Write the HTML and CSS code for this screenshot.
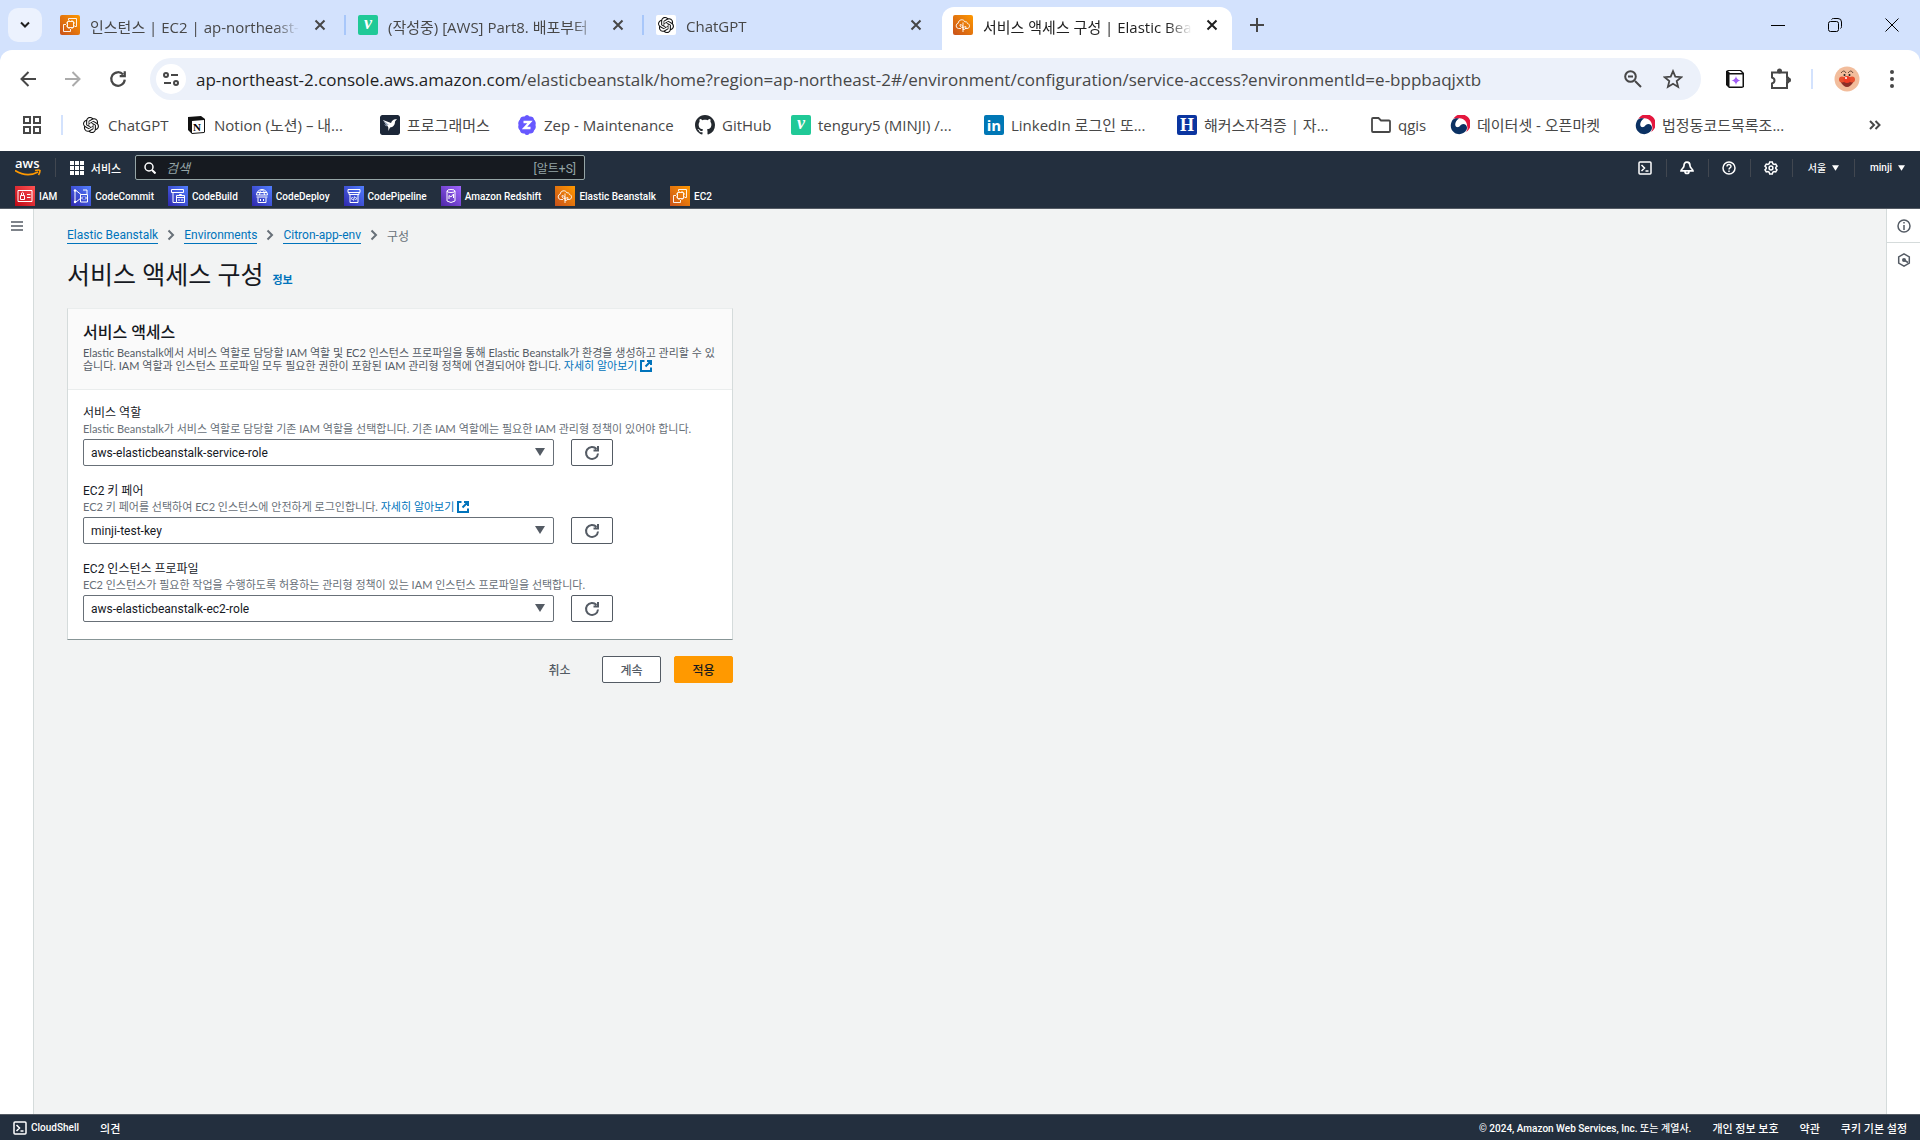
FILE: index.html
```html
<!DOCTYPE html>
<html lang="ko">
<head>
    <meta charset="UTF-8">
    <meta name="viewport" content="width=device-width, initial-scale=1.0">
    <title>서비스 액세스 구성 | Elastic Beanstalk</title>
    <link rel="stylesheet" href="styles.css">
</head>
<body>

    <!-- shared icons -->
    <svg class="defs" width="0" height="0" aria-hidden="true">
        <defs>
            <linearGradient id="orange" x1="0" y1="1" x2="1" y2="0"><stop offset="0" stop-color="#c8511b"/><stop offset="1" stop-color="#f90"/></linearGradient>
            <linearGradient id="blue" x1="0" y1="1" x2="1" y2="0"><stop offset="0" stop-color="#2e27ad"/><stop offset="1" stop-color="#527fff"/></linearGradient>
            <linearGradient id="red" x1="0" y1="1" x2="1" y2="0"><stop offset="0" stop-color="#bd0816"/><stop offset="1" stop-color="#ff5252"/></linearGradient>
            <linearGradient id="purple" x1="0" y1="1" x2="1" y2="0"><stop offset="0" stop-color="#4d27a8"/><stop offset="1" stop-color="#a166ff"/></linearGradient>
        </defs>
        <symbol id="close" viewBox="0 0 12 12"><path d="M1.5 1.5l9 9M10.5 1.5l-9 9" stroke="currentColor" stroke-width="2" fill="none"/></symbol>
        <symbol id="ec2" viewBox="0 0 20 20">
            <path fill="url(#orange)" d="M0 0h20v20H0z"/>
            <path fill="none" stroke="#fff" stroke-width=".9" d="M7.500 6.500h6v6h-6zM9 5v1.500M12 5v1.500M13.500 8H15M13.500 11H15M9 12.500V14M12 12.500V14M6 8h1.500M6 11h1.500M8.500 5V3.500h8v8H15M6 9.500H3.500v7h7V14"/>
        </symbol>
        <symbol id="beanstalk" viewBox="0 0 20 20">
            <path fill="url(#orange)" d="M0 0h20v20H0z"/>
            <path fill="none" stroke="#fff" stroke-width=".9" d="M8 13.500H5.500a2.700 2.700 0 0 1-.3-5.300C5.300 4.600 10.500 3.300 12 7c1-.6 2.400.1 2.400 1.400 3 .7 2.700 5.100-.4 5.100h-2M10 17V7.500M10 12.500c-2.300 0-3-1-3-2.800 2 0 3 .8 3 2.800zM10 14.500c2.300 0 3-1 3-2.800-2 0-3 .8-3 2.800z"/>
        </symbol>
        <symbol id="openai" viewBox="0 0 24 24"><path fill="#111" d="M22.2819 9.8211a5.9847 5.9847 0 0 0-.5157-4.9108 6.0462 6.0462 0 0 0-6.5098-2.9A6.0651 6.0651 0 0 0 4.9807 4.1818a5.9847 5.9847 0 0 0-3.9977 2.9 6.0462 6.0462 0 0 0 .7427 7.0966 5.98 5.98 0 0 0 .511 4.9107 6.051 6.051 0 0 0 6.5146 2.9001A5.9847 5.9847 0 0 0 13.2599 24a6.0557 6.0557 0 0 0 5.7718-4.2058 5.9894 5.9894 0 0 0 3.9977-2.9001 6.0557 6.0557 0 0 0-.7475-7.073zm-9.022 12.6081a4.4755 4.4755 0 0 1-2.8764-1.0408l.1419-.0804 4.7783-2.7582a.7948.7948 0 0 0 .3927-.6813v-6.7369l2.02 1.1686a.071.071 0 0 1 .038.052v5.5826a4.504 4.504 0 0 1-4.4945 4.4944zm-9.6607-4.1254a4.4708 4.4708 0 0 1-.5346-3.0137l.142.0852 4.783 2.7582a.7712.7712 0 0 0 .7806 0l5.8428-3.3685v2.3324a.0804.0804 0 0 1-.0332.0615L9.74 19.9502a4.4992 4.4992 0 0 1-6.1408-1.6464zM2.3408 7.8956a4.485 4.485 0 0 1 2.3655-1.9728V11.6a.7664.7664 0 0 0 .3879.6765l5.8144 3.3543-2.0201 1.1685a.0757.0757 0 0 1-.071 0l-4.8303-2.7865A4.504 4.504 0 0 1 2.3408 7.872zm16.5963 3.8558L13.1038 8.364 15.1192 7.2a.0757.0757 0 0 1 .071 0l4.8303 2.7913a4.4944 4.4944 0 0 1-.6765 8.1042v-5.6772a.79.79 0 0 0-.407-.667zm2.0107-3.0231l-.142-.0852-4.7735-2.7818a.7759.7759 0 0 0-.7854 0L9.409 9.2297V6.8974a.0662.0662 0 0 1 .0284-.0615l4.8303-2.7866a4.4992 4.4992 0 0 1 6.6802 4.66zM8.3065 12.863l-2.02-1.1638a.0804.0804 0 0 1-.038-.0567V6.0742a4.4992 4.4992 0 0 1 7.3757-3.4537l-.142.0805L8.704 5.459a.7948.7948 0 0 0-.3927.6813zm1.0976-2.3654l2.602-1.4998 2.6069 1.4998v2.9994l-2.5974 1.4997-2.6067-1.4997Z"/></symbol>
        <symbol id="gov" viewBox="0 0 20 20">
            <path fill="#e4173e" d="M3 4a9.500 9.500 0 1 1 13 13c3-4 1-8-2-9S7 2 3 4z"/>
            <path fill="#fff" d="M4 5c4-3 10-2 12 2s1 7-1 9z"/>
            <path fill="#0b3163" d="M2.500 5C-.5 10 .5 15 4.500 17.700s9.500 1.500 12-2.700c1.500-3.200-.5-6-3.300-6S9.600 13 6.800 12 5 6 9 3.500C6.500 3 4 3.500 2.500 5z"/>
        </symbol>
        <symbol id="shell" viewBox="0 0 14 14"><path fill="none" stroke="currentColor" stroke-width="1.500" d="M1 2q0-1 1-1h10q1 0 1 1v10q0 1-1 1H2q-1 0-1-1zM3.500 4l3 3-3 3M7.500 10h3"/></symbol>
        <symbol id="refresh" viewBox="0 0 16 16"><path fill="none" stroke="currentColor" stroke-width="2" d="M14 8.500A6 6 0 1 1 12.500 4M14 1v4.500H9.500"/></symbol>
        <symbol id="external" viewBox="0 0 12 12"><path fill="none" stroke="currentColor" stroke-width="2" d="M4.500 1H1v10h10V7.500M7 1h4v4M11 1L5.500 6.500"/></symbol>
        <symbol id="chevron" viewBox="0 0 8 12"><path fill="none" stroke="currentColor" stroke-width="2" d="M1.500 1.500L6 6l-4.500 4.500"/></symbol>
        <symbol id="caret" viewBox="0 0 10 8"><path fill="currentColor" d="M0 0h10L5 8z"/></symbol>
    </svg>

    <div class="tab-strip">
        <button class="tab-search" aria-label="탭 검색"><svg width="10" height="8" viewBox="0 0 10 8"><path d="M1 1.500L5 5.500l4-4" fill="none" stroke="currentColor" stroke-width="2"/></svg></button>
        <div class="tab">
            <svg class="favicon"><use href="#ec2"/></svg>
            <span class="tab-title">인스턴스 | EC2 | ap-northeast-2</span>
            <button class="tab-close" aria-label="닫기"><svg width="12" height="12"><use href="#close"/></svg></button>
        </div>
        <div class="tab divided">
            <span class="favicon velog">v</span>
            <span class="tab-title">(작성중) [AWS] Part8. 배포부터</span>
            <button class="tab-close" aria-label="닫기"><svg width="12" height="12"><use href="#close"/></svg></button>
        </div>
        <div class="tab divided">
            <span class="favicon gpt"><svg width="16" height="16"><use href="#openai"/></svg></span>
            <span class="tab-title">ChatGPT</span>
            <button class="tab-close" aria-label="닫기"><svg width="12" height="12"><use href="#close"/></svg></button>
        </div>
        <div class="tab active">
            <svg class="favicon"><use href="#beanstalk"/></svg>
            <span class="tab-title">서비스 액세스 구성 | Elastic Beanstalk</span>
            <button class="tab-close" aria-label="닫기"><svg width="12" height="12"><use href="#close"/></svg></button>
        </div>
        <button class="new-tab" aria-label="새 탭"><svg width="14" height="14" viewBox="0 0 14 14"><path d="M7 0v14M0 7h14" stroke="currentColor" stroke-width="2"/></svg></button>
        <div class="window-controls">
            <button aria-label="최소화"><svg width="14" height="14" viewBox="0 0 14 14"><path d="M0 7.500h14" stroke="#000"/></svg></button>
            <button aria-label="이전 크기로"><svg width="14" height="14" viewBox="0 0 14 14"><path d="M2.500 3.500h6q2 0 2 2v6q0 2-2 2h-6q-2 0-2-2v-6q0-2 2-2zM3.500 1.500Q4 .5 5.500.5H10q3.500 0 3.500 3.500v4.500q0 1.500-1 2" fill="none" stroke="#000"/></svg></button>
            <button aria-label="닫기"><svg width="14" height="14" viewBox="0 0 14 14"><path d="M.5.5l13 13M13.500.5l-13 13" stroke="#000"/></svg></button>
        </div>
    </div>

    <div class="browser">
        <div class="toolbar">
            <button class="nav-button" aria-label="뒤로"><svg width="16" height="16" viewBox="0 0 16 16"><path d="M16 8H2M8.500 1L1.500 8l7 7" fill="none" stroke="currentColor" stroke-width="2"/></svg></button>
            <button class="nav-button disabled" aria-label="앞으로"><svg width="16" height="16" viewBox="0 0 16 16"><path d="M0 8h14M7.500 1l7 7-7 7" fill="none" stroke="currentColor" stroke-width="2"/></svg></button>
            <button class="nav-button" aria-label="새로고침"><svg width="18" height="18"><use href="#refresh"/></svg></button>
            <div class="omnibox">
                <button class="site-info" aria-label="사이트 정보 보기"><svg width="16" height="16" viewBox="0 0 16 16"><g fill="none" stroke="currentColor" stroke-width="2"><circle cx="3" cy="4" r="2"/><circle cx="13" cy="12" r="2"/><path d="M8 4h7M1 12h7"/></g></svg></button>
                <div class="url"><span class="host">ap-northeast-2.console.aws.amazon.com</span>/elasticbeanstalk/home?region=ap-northeast-2#/environment/configuration/service-access?environmentId=e-bppbaqjxtb</div>
                <button aria-label="확대/축소"><svg width="18" height="18" viewBox="0 0 18 18"><path d="M11 11l6 6M4 6.500h5" stroke="currentColor" stroke-width="2"/><circle cx="6.500" cy="6.500" r="5.300" fill="none" stroke="currentColor" stroke-width="2"/></svg></button>
                <button aria-label="북마크"><svg width="20" height="20" viewBox="0 0 20 20"><path d="M10 2.200l2.300 5.500 6 .5-4.600 3.900 1.400 5.800L10 14.800l-5.100 3.100 1.400-5.800-4.600-3.900 6-.5z" fill="none" stroke="currentColor" stroke-width="1.800"/></svg></button>
            </div>
            <div class="extensions">
                <button aria-label="Notion Web Clipper"><svg width="20" height="20" viewBox="0 0 20 20"><path d="M1 2l2-1h13l3 3v14l-2 1H4l-3-3z" fill="#111"/><path d="M4.500 5.500h13v12h-13z" fill="#fff"/><path d="M3 2h12l2 2H5z" fill="#fff"/><path d="M11 7q.6 3.900 4.500 4.500Q11.600 12 11 16q-.6-4-4.500-4.500Q10.400 10.900 11 7z" fill="#a05cf5"/></svg></button>
                <button aria-label="확장 프로그램"><svg width="22" height="22" viewBox="0 0 22 22"><path d="M3 4.500h15v5.200h1v4.600h-1V20H3v-4.500q2.500-.8 2.500-3T3 9.500z" fill="none" stroke="currentColor" stroke-width="2"/><circle cx="10.500" cy="3" r="2.500" fill="currentColor"/><circle cx="19.500" cy="12" r="2.500" fill="currentColor"/></svg></button>
                <span class="bar-divider"></span>
                <button aria-label="프로필"><svg width="26" height="26" viewBox="0 0 26 26"><circle cx="13" cy="13" r="12.500" fill="#f2bd9c"/><path d="M7 7q3-4 5 0M14 7q3-4 5 0" fill="none" stroke="#6b4938"/><circle cx="10.500" cy="9" r="1" fill="#222"/><circle cx="15.500" cy="9" r="1" fill="#222"/><path d="M6 15q7 12 14 0z" fill="#8b2f28"/><circle cx="8" cy="13.500" r="3" fill="#e7512f"/><circle cx="18" cy="13.500" r="3" fill="#e7512f"/><circle cx="13" cy="13.500" r="3.500" fill="#ef3d26"/><circle cx="12" cy="12" r="1" fill="#fff"/></svg></button>
                <button aria-label="메뉴"><svg width="4" height="20" viewBox="0 0 4 20"><g fill="currentColor"><circle cx="2" cy="3" r="2"/><circle cx="2" cy="10" r="2"/><circle cx="2" cy="17" r="2"/></g></svg></button>
            </div>
        </div>

        <div class="bookmarks">
            <button class="apps" aria-label="앱"><svg width="18" height="18" viewBox="0 0 18 18"><path d="M1 1h6v6H1zM11 1h6v6h-6zM1 11h6v6H1zM11 11h6v6h-6z" fill="none" stroke="currentColor" stroke-width="2"/></svg></button>
            <span class="bar-divider"></span>
            <nav class="bookmark-list">
                <a href="#"><span class="favicon gpt"><svg width="16" height="16"><use href="#openai"/></svg></span>ChatGPT</a>
                <a href="#"><svg class="favicon" viewBox="0 0 20 20"><path d="M1 2l13-1 4 3v13l-1 1-12 1-4-4z" fill="#111"/><path d="M5 6l12-1v12L5 18z" fill="#fff"/><text x="6" y="16" class="notion-n">N</text></svg>Notion (노션) – 내...</a>
                <a href="#"><svg class="favicon" viewBox="0 0 20 20"><rect width="20" height="20" rx="2" fill="#1c2738"/><path d="M3 5l8 3 1-2 2-1.500 3-.5-2 2.500c0 4-2 5.500-5 6L8.500 16l-.3-4z" fill="#fff"/><path d="M3 5l6 5-3-.3zM4 9l4 2-2 .2z" fill="#9aa8bd"/></svg>프로그래머스</a>
                <a href="#"><svg class="favicon" viewBox="0 0 20 20"><path d="M10 0q1.500 0 2.500 1.500 4-.5 4.500 3Q19.500 7 18.500 10q1 3-1.500 5.500-.5 3.500-4.500 3Q11.500 20 10 20t-2.500-1.500q-4 .5-4.500-3Q.5 13 1.500 10 .5 7 3 4.500q.5-3.500 4.500-3Q8.500 0 10 0z" fill="#6758ff"/><path d="M6.500 7h6.500l-5.500 6h6" fill="none" stroke="#fff" stroke-width="2.400"/></svg>Zep - Maintenance</a>
                <a href="#"><svg class="favicon" viewBox="0 0 16 16"><path fill="#24292f" d="M8 0C3.580 0 0 3.580 0 8c0 3.540 2.290 6.530 5.470 7.590.4.070.55-.17.55-.38 0-.19-.01-.82-.01-1.490-2.010.37-2.530-.49-2.690-.94-.09-.23-.48-.94-.82-1.130-.28-.15-.68-.52-.01-.53.63-.01 1.080.58 1.230.82.72 1.210 1.870.87 2.330.66.07-.52.28-.87.51-1.070-1.780-.2-3.640-.89-3.640-3.950 0-.87.31-1.590.82-2.150-.08-.2-.36-1.020.08-2.120 0 0 .67-.21 2.200.82.64-.18 1.320-.27 2-.27s1.360.09 2 .27c1.530-1.040 2.200-.82 2.200-.82.44 1.100.16 1.920.08 2.120.51.56.82 1.270.82 2.150 0 3.070-1.870 3.750-3.650 3.950.29.25.54.73.54 1.480 0 1.070-.01 1.930-.01 2.200 0 .21.15.46.55.38A8.010 8.010 0 0 0 16 8c0-4.420-3.580-8-8-8z"/></svg>GitHub</a>
                <a href="#"><span class="favicon velog">v</span>tengury5 (MINJI) /...</a>
                <a href="#"><span class="favicon linkedin">in</span>LinkedIn 로그인 또...</a>
                <a href="#"><span class="favicon hackers">H</span>해커스자격증 | 자...</a>
                <a href="#"><svg class="favicon" viewBox="0 0 20 20"><path d="M1 4q0-1 1-1h5.500L10 5.500h8q1 0 1 1V16q0 1-1 1H2q-1 0-1-1z" fill="none" stroke="#474747" stroke-width="1.800"/></svg>qgis</a>
                <a href="#"><svg class="favicon"><use href="#gov"/></svg>데이터셋 - 오픈마켓</a>
                <a href="#"><svg class="favicon"><use href="#gov"/></svg>법정동코드목록조...</a>
            </nav>
            <button class="more" aria-label="북마크 더보기"><svg width="12" height="10" viewBox="0 0 12 10"><path d="M1 1l4 4-4 4M6.500 1l4 4-4 4" fill="none" stroke="currentColor" stroke-width="2"/></svg></button>
        </div>
    </div>

    <header class="aws-header">
        <div class="aws-bar">
            <a class="aws-logo" href="#" aria-label="AWS"><span>aws</span><svg width="26" height="8" viewBox="0 0 26 8"><path d="M0 1.500q12 7.500 23 1.500M20 1.500q4-1 5 0 0 2-1.500 4.500" fill="none" stroke="#f90" stroke-width="1.600"/></svg></a>
            <button class="services"><svg width="14" height="14" viewBox="0 0 14 14"><path d="M0 0h4v4H0zM5 0h4v4H5zM10 0h4v4h-4zM0 5h4v4H0zM5 5h4v4H5zM10 5h4v4h-4zM0 10h4v4H0zM5 10h4v4H5zM10 10h4v4h-4z" fill="currentColor"/></svg>서비스</button>
            <label class="search">
                <svg width="12" height="12" viewBox="0 0 12 12"><path d="M8 8l3.500 3.500" stroke="currentColor" stroke-width="2"/><circle cx="5" cy="5" r="4" fill="none" stroke="currentColor" stroke-width="1.500"/></svg>
                <input type="text" placeholder="검색" aria-label="검색">
                <span>[알트+S]</span>
            </label>
            <div class="aws-tools">
                <button class="icon" aria-label="CloudShell"><svg width="14" height="14"><use href="#shell"/></svg></button>
                <button class="icon" aria-label="알림"><svg width="14" height="14" viewBox="0 0 14 14"><path d="M7 1.200c2.300 0 3 1.600 3 3.500C10 7 13 8.200 13 9.800H1C1 8.200 4 7 4 4.700 4 2.800 4.700 1.200 7 1.200zM5 10.500q0 2 2 2t2-2" fill="none" stroke="currentColor" stroke-width="1.700"/></svg></button>
                <button class="icon" aria-label="지원"><svg width="14" height="14" viewBox="0 0 14 14"><circle cx="7" cy="7" r="6" fill="none" stroke="currentColor" stroke-width="1.500"/><path d="M5 5.600C5 2.900 9 2.900 9 5.500 9 6.700 7 7 7 8.500M7 9.500V11" fill="none" stroke="currentColor" stroke-width="1.400"/></svg></button>
                <button class="icon" aria-label="설정"><svg width="14" height="14" viewBox="0 0 14 14"><path d="M5.700 1h2.600l.5 1.700 1.200.7 1.700-.4 1.300 2.200-1.200 1.200v1.200L13 8.800 11.700 11l-1.700-.4-1.200.7-.5 1.700H5.700l-.5-1.700-1.200-.7-1.700.4L1 8.800l1.200-1.200V6.400L1 5.200 2.300 3l1.700.4 1.200-.7z" fill="none" stroke="currentColor" stroke-width="1.500"/><circle cx="7" cy="7" r="1.900" fill="none" stroke="currentColor" stroke-width="1.500"/></svg></button>
                <button>서울<svg width="7" height="6"><use href="#caret"/></svg></button>
                <button>minji<svg width="7" height="6"><use href="#caret"/></svg></button>
            </div>
        </div>
        <nav class="favorites">
            <a href="#"><svg viewBox="0 0 20 20"><path fill="url(#red)" d="M0 0h20v20H0z"/><path d="M3 4.500h14v11H3zM5.500 9.500h4v4h-4zM6.500 9.500V7q1-1.500 2 0v2.500M12 8.500h3.500M12 11.500h3.500" fill="none" stroke="#fff"/></svg>IAM</a>
            <a href="#"><svg viewBox="0 0 20 20"><path fill="url(#blue)" d="M0 0h20v20H0z"/><path d="M4 5v11M5 4.500l5 4M5 16l5-4M9.500 8.500h7v7.500h-7zM12 10.500L10.500 12l1.500 1.500M14 10.500l1.500 1.500-1.500 1.500M12 4h4v4" fill="none" stroke="#fff"/><circle cx="4" cy="4.500" r="1.200" fill="#fff"/><circle cx="4" cy="16" r="1.200" fill="#fff"/></svg>CodeCommit</a>
            <a href="#"><svg viewBox="0 0 20 20"><path fill="url(#blue)" d="M0 0h20v20H0z"/><path d="M3.500 3.500h12v3h-12zM5 6.500v10h3M8.500 9.500h8v7h-8zM8.500 11.500h8M11.500 9.500v-1h2v1M11 13v2M14 13v2" fill="none" stroke="#fff"/></svg>CodeBuild</a>
            <a href="#"><svg viewBox="0 0 20 20"><path fill="url(#blue)" d="M0 0h20v20H0z"/><path d="M4.500 9a5.500 5.500 0 0 1 11 0zM7.500 9q0-4 2.500-5.500Q12.500 5 12.500 9M5 6.500h10M4.500 11h11M6 11.500v5h8v-5M8.500 13v2M11.500 13v2" fill="none" stroke="#fff"/></svg>CodeDeploy</a>
            <a href="#"><svg viewBox="0 0 20 20"><path fill="url(#blue)" d="M0 0h20v20H0z"/><path d="M4 3.500h12v3H4zM5 6.500v2h10v-2M6 8.500v8h8v-8M8.500 11L7.500 12.500l1 1.500M11.500 11l1 1.500-1 1.500M10.500 10.500l-1 4" fill="none" stroke="#fff"/></svg>CodePipeline</a>
            <a href="#"><svg viewBox="0 0 20 20"><path fill="url(#purple)" d="M0 0h20v20H0z"/><path d="M6 5v10q4 3 8 0V5M8 13V9.500l2 1.500 2.500-3v4" fill="none" stroke="#fff"/><ellipse cx="10" cy="5" rx="4" ry="1.500" fill="none" stroke="#fff"/></svg>Amazon Redshift</a>
            <a href="#"><svg><use href="#beanstalk"/></svg>Elastic Beanstalk</a>
            <a href="#"><svg><use href="#ec2"/></svg>EC2</a>
        </nav>
    </header>

    <div class="console">
        <aside class="rail">
            <button aria-label="탐색 열기"><svg width="12" height="12" viewBox="0 0 12 12"><path d="M0 2h12M0 6h12M0 10h12" stroke="currentColor" stroke-width="1.500"/></svg></button>
        </aside>

        <main>
            <nav class="breadcrumb">
                <a href="#">Elastic Beanstalk</a>
                <svg width="8" height="12"><use href="#chevron"/></svg>
                <a href="#">Environments</a>
                <svg width="8" height="12"><use href="#chevron"/></svg>
                <a href="#">Citron-app-env</a>
                <svg width="8" height="12"><use href="#chevron"/></svg>
                <span>구성</span>
            </nav>

            <div class="page-title">
                <h1>서비스 액세스 구성</h1>
                <a href="#">정보</a>
            </div>

            <form class="config-form">
                <section class="card">
                    <div class="card-header">
                        <h2>서비스 액세스</h2>
                        <p>Elastic Beanstalk에서 서비스 역할로 담당할 IAM 역할 및 EC2 인스턴스 프로파일을 통해 Elastic Beanstalk가 환경을 생성하고 관리할 수 있습니다. IAM 역할과 인스턴스 프로파일 모두 필요한 권한이 포함된 IAM 관리형 정책에 연결되어야 합니다. <a href="#">자세히 알아보기 <svg width="12" height="12"><use href="#external"/></svg></a></p>
                    </div>
                    <div class="card-body">
                        <div class="field">
                            <label for="service-role">서비스 역할</label>
                            <p>Elastic Beanstalk가 서비스 역할로 담당할 기존 IAM 역할을 선택합니다. 기존 IAM 역할에는 필요한 IAM 관리형 정책이 있어야 합니다.</p>
                            <div class="control">
                                <div class="select">
                                    <select id="service-role"><option>aws-elasticbeanstalk-service-role</option></select>
                                    <svg width="10" height="8"><use href="#caret"/></svg>
                                </div>
                                <button type="button" class="button refresh" aria-label="새로고침"><svg width="16" height="16"><use href="#refresh"/></svg></button>
                            </div>
                        </div>
                        <div class="field">
                            <label for="key-pair">EC2 키 페어</label>
                            <p>EC2 키 페어를 선택하여 EC2 인스턴스에 안전하게 로그인합니다. <a href="#">자세히 알아보기 <svg width="12" height="12"><use href="#external"/></svg></a></p>
                            <div class="control">
                                <div class="select">
                                    <select id="key-pair"><option>minji-test-key</option></select>
                                    <svg width="10" height="8"><use href="#caret"/></svg>
                                </div>
                                <button type="button" class="button refresh" aria-label="새로고침"><svg width="16" height="16"><use href="#refresh"/></svg></button>
                            </div>
                        </div>
                        <div class="field">
                            <label for="instance-profile">EC2 인스턴스 프로파일</label>
                            <p>EC2 인스턴스가 필요한 작업을 수행하도록 허용하는 관리형 정책이 있는 IAM 인스턴스 프로파일을 선택합니다.</p>
                            <div class="control">
                                <div class="select">
                                    <select id="instance-profile"><option>aws-elasticbeanstalk-ec2-role</option></select>
                                    <svg width="10" height="8"><use href="#caret"/></svg>
                                </div>
                                <button type="button" class="button refresh" aria-label="새로고침"><svg width="16" height="16"><use href="#refresh"/></svg></button>
                            </div>
                        </div>
                    </div>
                </section>
                <div class="actions">
                    <button type="button" class="button link">취소</button>
                    <button type="button" class="button">계속</button>
                    <button type="submit" class="button primary">적용</button>
                </div>
            </form>
        </main>

        <aside class="rail right">
            <button aria-label="정보"><svg width="14" height="14" viewBox="0 0 14 14"><circle cx="7" cy="7" r="6" fill="none" stroke="currentColor" stroke-width="1.500"/><path d="M7 3v1.500M7 6v5" stroke="currentColor" stroke-width="1.500"/></svg></button>
            <button aria-label="자습서"><svg width="14" height="14" viewBox="0 0 14 14"><path d="M7 .9l5.300 3v6.200L7 13.100l-5.300-3V3.900z" fill="none" stroke="currentColor" stroke-width="1.500"/><circle cx="7" cy="7" r="2" fill="currentColor"/><path d="M7 7l4 2.500" stroke="currentColor" stroke-width="1.500"/></svg></button>
        </aside>
    </div>

    <footer class="aws-footer">
        <a class="small" href="#"><svg width="14" height="14"><use href="#shell"/></svg>CloudShell</a>
        <a href="#">의견</a>
        <span class="copyright small">© 2024, Amazon Web Services, Inc. 또는 계열사.</span>
        <a href="#">개인 정보 보호</a>
        <a href="#">약관</a>
        <a href="#">쿠키 기본 설정</a>
    </footer>

</body>
</html>
```

FILE: styles.css
```css
* {
    box-sizing: border-box;
}

body {
    display: flex;
    flex-direction: column;
    min-height: 100vh;
    margin: 0;
    font-family: Roboto, "Noto Sans CJK KR", sans-serif;
    font-size: 12px;
    color: #16191f;
    background-color: #d3e2fd;
}

h1, h2, p {
    margin: 0;
    font-weight: 400;
}

a {
    color: #0073bb;
    text-decoration: none;
}

button {
    display: flex;
    align-items: center;
    justify-content: center;
    padding: 0;
    border: 0;
    background: none;
    color: inherit;
    font: inherit;
}

svg {
    flex: none;
}

.defs {
    position: absolute;
}

/* browser tabs */
.tab-strip {
    display: flex;
    height: 50px;
    padding-left: 8px;
    font-family: "Open Sans", "Noto Sans CJK KR", sans-serif;
    font-size: 15px;
    color: #474747;
}

.tab-search {
    width: 34px;
    height: 34px;
    margin: 8px 4px 0 0;
    border-radius: 10px;
    background-color: #ecf2fe;
    color: #1f1f1f;
}

.tab {
    display: flex;
    align-items: center;
    width: 298px;
    padding: 0 14px;
}

.tab.divided {
    background: linear-gradient(#a8c7fa, #a8c7fa) no-repeat left center / 2px 20px;
}

.tab.active {
    width: 290px;
    height: 43px;
    margin: 7px 6px 0 2px;
    padding: 0 10px 7px 11px;
    border-radius: 12px 12px 0 0;
    background-color: #fff;
    color: #1f1f1f;
}

.favicon {
    flex: none;
    width: 20px;
    height: 20px;
    border-radius: 2px;
    text-align: center;
    line-height: 20px;
    color: #fff;
}

.velog {
    background-color: #20c997;
    font-family: "Liberation Serif", serif;
    font-size: 18px;
    font-style: italic;
    font-weight: 700;
    line-height: 17px;
}

.gpt {
    padding: 2px;
    background-color: #fff;
    line-height: 0;
}

.linkedin {
    background-color: #0077b5;
    font-weight: 700;
}

.hackers {
    background-color: #0b35a0;
    font-family: "Liberation Serif", serif;
    font-size: 18px;
    font-weight: 700;
}

.notion-n {
    font: 700 11px "Liberation Serif", serif;
}

.tab-title {
    flex: 1;
    margin: 2px 10px 0;
    overflow: hidden;
    white-space: nowrap;
    -webkit-mask-image: linear-gradient(to right, #000 88%, transparent);
    mask-image: linear-gradient(to right, #000 88%, transparent);
}

.tab-close {
    width: 20px;
    height: 20px;
}

.new-tab {
    width: 38px;
}

.window-controls {
    display: flex;
    margin-left: auto;
}

.window-controls button {
    width: 57px;
}

/* browser toolbar and bookmarks */
.browser {
    border-radius: 12px 12px 0 0;
    background-color: #fff;
    font-family: "Open Sans", "Noto Sans CJK KR", sans-serif;
    color: #474747;
}

.toolbar {
    display: flex;
    align-items: center;
    padding: 8px 6px 8px 5px;
}

.nav-button {
    width: 45px;
}

.nav-button.disabled {
    color: #ababab;
}

.omnibox {
    display: flex;
    flex: 1;
    align-items: center;
    height: 42px;
    margin-left: 10px;
    padding: 0 8px 0 6px;
    border-radius: 21px;
    background-color: #ecf1fa;
}

.omnibox button {
    width: 40px;
    height: 30px;
}

.omnibox .site-info {
    width: 30px;
    border-radius: 15px;
    background-color: #fff;
}

.url {
    flex: 1;
    margin-left: 10px;
    overflow: hidden;
    white-space: nowrap;
    font-size: 17px;
}

.host {
    color: #1f1f1f;
}

.extensions {
    display: flex;
    align-items: center;
    margin-left: 11px;
}

.extensions button {
    width: 45px;
}

.bar-divider {
    width: 2px;
    height: 20px;
    margin: 0 11px 0 9px;
    background-color: #d3e2fd;
}

.bookmarks {
    display: flex;
    align-items: center;
    height: 43px;
    padding: 0 12px 10px 19px;
    font-size: 15px;
}

.apps {
    width: 26px;
}

.bookmarks .bar-divider {
    margin: 0 18px 0 16px;
}

.bookmark-list {
    display: grid;
    flex: 1;
    grid-template-columns: 106px 193px 137px 178px 96px 193px 193px 194px 79px 185px auto;
}

.bookmark-list a {
    display: flex;
    align-items: center;
    gap: 7px;
    color: #474747;
    white-space: nowrap;
}

.more {
    width: 66px;
}

/* console header */
.aws-header {
    border-bottom: 1px solid #545b64;
    background-color: #232f3e;
    color: #fff;
    font-size: 11px;
    font-weight: 500;
}

.aws-bar {
    display: flex;
    align-items: center;
    height: 33px;
}

.aws-logo {
    display: flex;
    flex-direction: column;
    width: 56px;
    padding-left: 15px;
    border-right: 1px solid #414750;
    color: #fff;
    font-family: "Open Sans", sans-serif;
    font-size: 13px;
    font-weight: 600;
    line-height: 11px;
}

.services {
    gap: 7px;
    width: 79px;
}

.search {
    display: flex;
    align-items: center;
    gap: 10px;
    width: 450px;
    height: 25px;
    padding: 0 8px;
    border: 1px solid #95a5a6;
    border-radius: 2px;
    background-color: #161a20;
    color: #fff;
}

.search input {
    flex: 1;
    padding: 0;
    border: 0;
    outline: 0;
    background: none;
    color: #fff;
    font: italic 13px "Noto Sans CJK KR", sans-serif;
}

.search input::placeholder,
.search span {
    color: #95a5a6;
}

.search span {
    font-size: 12px;
    font-weight: 400;
}

.aws-tools {
    display: flex;
    margin-left: auto;
}

.aws-tools button {
    gap: 6px;
    height: 18px;
    padding: 0 15px;
    border-left: 1px solid #414750;
    font-size: 10px;
}

.aws-tools .icon {
    width: 42px;
    padding: 0;
}

.aws-tools button:first-child {
    border-left: 0;
}

.favorites {
    display: flex;
    gap: 14px;
    padding: 2px 15px;
    font-size: 10px;
}

.favorites a {
    display: flex;
    align-items: center;
    gap: 4px;
    color: #fff;
}

.favorites svg {
    width: 20px;
    height: 20px;
}

/* console body */
.console {
    display: flex;
    flex: 1;
    background-color: #f2f3f3;
}

.rail {
    width: 34px;
    border-right: 1px solid #d5dbdb;
    background-color: #fff;
    color: #545b64;
}

.rail button {
    width: 33px;
    height: 34px;
}

.rail.right {
    border-right: 0;
    border-left: 1px solid #d5dbdb;
}

.rail.right button:first-child {
    border-bottom: 1px solid #d5dbdb;
}

main {
    flex: 1;
    padding: 16px 33px;
}

.breadcrumb {
    display: flex;
    align-items: center;
    gap: 9px;
    height: 20px;
    color: #687078;
}

.breadcrumb a {
    border-bottom: 1px solid #0073bb;
    line-height: 16px;
}

.page-title {
    display: flex;
    align-items: baseline;
    gap: 9px;
    margin: 13px 0 14px;
}

.page-title h1 {
    font-size: 25px;
    line-height: 36px;
}

.page-title a {
    font-size: 11px;
    font-weight: 700;
}

.config-form {
    width: 666px;
}

.card {
    border: 1px solid #d5dbdb;
    border-top-color: #eaeded;
    border-bottom-color: #879596;
    background-color: #fff;
}

.card-header {
    padding: 13px 15px 17px;
    border-bottom: 1px solid #eaeded;
    background-color: #fafafa;
}

.card-header h2 {
    margin-bottom: 2px;
    font-size: 16px;
    font-weight: 500;
    line-height: 22px;
}

.card p {
    color: #687078;
    font-family: Lato, "Noto Sans CJK KR", sans-serif;
    font-size: 11px;
    line-height: 13px;
    word-break: break-all;
}

.card .card-header p {
    color: #545b64;
}

.card p svg {
    vertical-align: -2px;
}

.card-body {
    display: grid;
    gap: 17px;
    padding: 15px 15px 17px;
}

.field label {
    display: block;
    line-height: 16px;
}

.card .field p {
    line-height: 16px;
}

.control {
    display: flex;
    gap: 17px;
    margin-top: 2px;
}

.select {
    position: relative;
    width: 471px;
    color: #545b64;
}

.select select {
    width: 100%;
    height: 27px;
    padding: 0 7px;
    border: 1px solid #687078;
    border-radius: 2px;
    appearance: none;
    background-color: #fff;
    color: #16191f;
    font: inherit;
}

.select svg {
    position: absolute;
    top: 9px;
    right: 9px;
    pointer-events: none;
}

.button {
    width: 59px;
    height: 27px;
    border: 1px solid #545b64;
    border-radius: 2px;
    background-color: #fff;
    color: #545b64;
    font-weight: 500;
}

.button.refresh {
    width: 42px;
}

.button.link {
    border-color: transparent;
    background: none;
}

.button.primary {
    border-color: #f90;
    background-color: #f90;
    color: #16191f;
}

.actions {
    display: flex;
    gap: 13px;
    justify-content: flex-end;
    margin-top: 16px;
}

/* console footer */
.aws-footer {
    display: flex;
    align-items: center;
    gap: 21px;
    height: 26px;
    padding: 0 13px;
    border-top: 1px solid #545b64;
    background-color: #232f3e;
    color: #fff;
    font-size: 11px;
    font-weight: 500;
}

.aws-footer a {
    display: flex;
    align-items: center;
    gap: 4px;
    color: #fff;
}

.aws-footer .small {
    font-size: 10px;
}

.copyright {
    margin-left: auto;
}
```
